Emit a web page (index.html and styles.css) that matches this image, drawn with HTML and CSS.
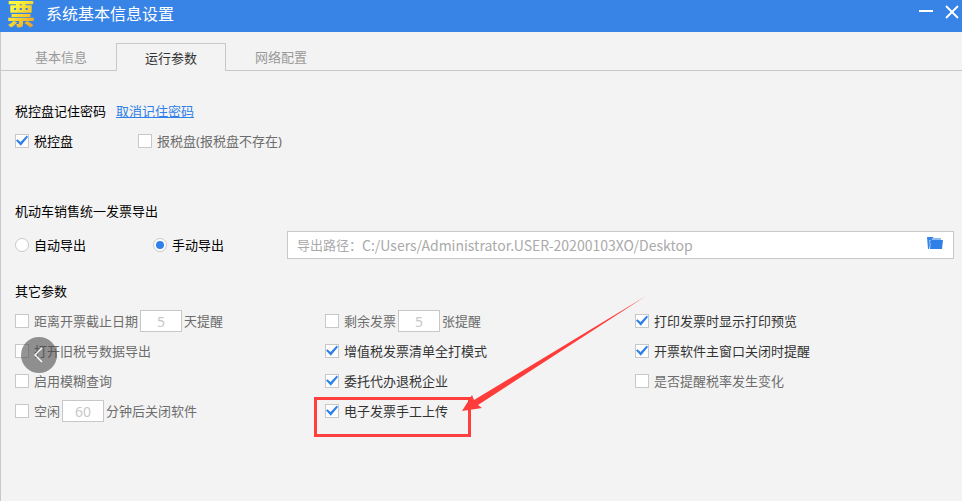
FILE: index.html
```html
<!DOCTYPE html>
<html lang="zh-CN">
<head>
    <meta charset="UTF-8">
    <meta name="viewport" content="width=device-width, initial-scale=1">
    <link rel="stylesheet" href="styles.css">
    <title>系统基本信息设置</title>
</head>
<body>

<header class="titlebar">
    <span class="logo">票</span>
    <h1 class="title">系统基本信息设置</h1>
    <button type="button" class="winbtn" aria-label="最小化">
        <svg width="16" height="16" viewBox="0 0 16 16"><path d="M1 7h14" stroke="#fff" stroke-width="2"/></svg>
    </button>
    <button type="button" class="winbtn" aria-label="关闭">
        <svg width="16" height="16" viewBox="0 0 16 16"><path d="M2 2l12 12M14 2L2 14" stroke="#fff" stroke-width="1.8"/></svg>
    </button>
</header>

<main class="window">
    <nav class="tabs">
        <button type="button" class="tab">基本信息</button>
        <button type="button" class="tab active">运行参数</button>
        <button type="button" class="tab">网络配置</button>
    </nav>

    <div class="content">
        <section class="section">
            <div class="row">
                <h2 class="heading">税控盘记住密码</h2>
                <a href="#" class="link">取消记住密码</a>
            </div>
            <div class="row disks">
                <label class="option strong"><input type="checkbox" class="check" checked>税控盘</label>
                <label class="option muted"><input type="checkbox" class="check">报税盘(报税盘不存在)</label>
            </div>
        </section>

        <section class="section">
            <h2 class="heading">机动车销售统一发票导出</h2>
            <div class="export">
                <label class="option strong"><input type="radio" name="export" class="radio">自动导出</label>
                <label class="option strong"><input type="radio" name="export" class="radio" checked>手动导出</label>
                <div class="path">
                    <label for="path">导出路径：</label>
                    <input type="text" id="path" class="pathinput" value="C:/Users/Administrator.USER-20200103XO/Desktop">
                    <button type="button" class="browse" aria-label="选择文件夹">
                        <svg width="16" height="13" viewBox="0 0 16 13">
                            <path d="M0 0h6l1 2h7v3H4L2 12H1z" fill="#3784e7"/>
                            <path d="M5 1h9v3H3L2 11V3h3z" fill="#8dbcf5"/>
                            <path d="M4 3h12l-1 9H3z" fill="#3080e8"/>
                        </svg>
                    </button>
                </div>
            </div>
        </section>

        <section class="section">
            <h2 class="heading">其它参数</h2>
            <div class="params">
                <div class="column">
                    <div class="option muted">
                        <input type="checkbox" class="check" id="deadline">
                        <label for="deadline">距离开票截止日期</label>
                        <input type="text" class="number" value="5" aria-label="天数">
                        <span>天提醒</span>
                    </div>
                    <label class="option muted"><input type="checkbox" class="check">打开旧税号数据导出</label>
                    <label class="option muted"><input type="checkbox" class="check">启用模糊查询</label>
                    <div class="option muted">
                        <input type="checkbox" class="check" id="idle">
                        <label for="idle">空闲</label>
                        <input type="text" class="number" value="60" aria-label="分钟">
                        <span>分钟后关闭软件</span>
                    </div>
                    <button type="button" class="prev" aria-label="上一张">
                        <svg width="36" height="36" viewBox="0 0 36 36"><path d="M21 11l-7 7 7 7" fill="none" stroke="#fff" stroke-width="1.4"/></svg>
                    </button>
                </div>
                <div class="column">
                    <div class="option muted">
                        <input type="checkbox" class="check" id="remain">
                        <label for="remain">剩余发票</label>
                        <input type="text" class="number" value="5" aria-label="张数">
                        <span>张提醒</span>
                    </div>
                    <label class="option"><input type="checkbox" class="check" checked>增值税发票清单全打模式</label>
                    <label class="option"><input type="checkbox" class="check" checked>委托代办退税企业</label>
                    <label class="option"><input type="checkbox" class="check" checked>电子发票手工上传</label>
                    <div class="highlight"></div>
                    <svg class="arrow" width="186" height="116" viewBox="0 0 186 116">
                        <path d="M0 115L10 99l2 5L184 0 16 109l4 3z" fill="#ff3c3a"/>
                    </svg>
                </div>
                <div class="column">
                    <label class="option"><input type="checkbox" class="check" checked>打印发票时显示打印预览</label>
                    <label class="option"><input type="checkbox" class="check" checked>开票软件主窗口关闭时提醒</label>
                    <label class="option muted"><input type="checkbox" class="check">是否提醒税率发生变化</label>
                </div>
            </div>
        </section>
    </div>
</main>

</body>
</html>
```

FILE: styles.css
```css
* {
    box-sizing: border-box;
}

body {
    margin: 0;
    min-height: 100vh;
    display: flex;
    flex-direction: column;
    background-color: #f3f3f3;
    color: #333;
    font-family: "Noto Sans", "Noto Sans CJK SC", sans-serif;
    font-size: 13px;
    line-height: 20px;
}

button,
input {
    margin: 0;
    padding: 0;
    border: none;
    background: none;
    color: inherit;
    font: inherit;
}

button {
    cursor: pointer;
}

svg {
    display: block;
}

/* title bar */

.titlebar {
    display: flex;
    gap: 10px;
    height: 32px;
    padding: 0 2px 0 7px;
    background-color: #3783e6;
    color: #fff;
}

.logo {
    width: 29px;
    font-size: 28px;
    font-weight: 900;
    line-height: 28px;
    color: transparent;
    background: linear-gradient(135deg, #fff83c 20%, #e9a126 85%);
    -webkit-background-clip: text;
    background-clip: text;
}

.title {
    flex: 1;
    margin: 0;
    font-size: 16px;
    font-weight: normal;
    line-height: 28px;
}

.winbtn {
    height: 24px;
}

/* tabs */

.window {
    flex: 1;
    border-left: 1px solid #c8c8c8;
}

.tabs {
    display: flex;
    padding: 11px 0 0 5px;
    box-shadow: inset 0 -1px #c8c8c8;
}

.tab {
    width: 110px;
    height: 28px;
    color: #999;
}

.tab.active {
    border: 1px solid #c8c8c8;
    border-bottom: none;
    background-color: #f3f3f3;
    color: #333;
}

/* settings */

.content {
    display: flex;
    flex-direction: column;
    gap: 40px;
    padding: 25px 8px 20px 14px;
}

.section + .section + .section {
    margin-top: -24px;
}

.row {
    display: flex;
    align-items: center;
    gap: 10px;
}

.heading {
    margin: 0;
    color: #000;
    font-size: 13px;
    font-weight: normal;
    line-height: 30px;
}

.link {
    color: #2f80e8;
}

.option {
    display: flex;
    align-items: center;
    height: 30px;
    white-space: nowrap;
}

.strong {
    color: #000;
}

.muted {
    color: #6d6d6d;
}

.disks {
    gap: 65px;
}

.export {
    display: grid;
    grid-template-columns: 138px 134px 1fr;
    align-items: center;
    padding-top: 4px;
}

.check,
.radio {
    appearance: none;
    flex: none;
    width: 14px;
    height: 14px;
    margin-right: 5px;
    border: 1px solid #c8c8c8;
    background-color: #fff;
}

.check:checked::before {
    content: "";
    display: block;
    width: 12px;
    height: 12px;
    background-color: #2f80e8;
    clip-path: polygon(0 45%, 12% 35%, 38% 58%, 90% 5%, 100% 16%, 40% 90%);
}

.radio {
    border-radius: 50%;
}

.radio:checked::before {
    content: "";
    display: block;
    width: 8px;
    height: 8px;
    margin: 2px;
    border-radius: 50%;
    background-color: #2f80e8;
}

.path {
    display: flex;
    align-items: center;
    height: 28px;
    padding: 0 10px 0 9px;
    border: 1px solid #c8c8c8;
    background-color: #fff;
    color: #aaa;
}

.pathinput {
    flex: 1;
    min-width: 0;
    font-family: "Noto Sans CJK SC", sans-serif;
    font-size: 14px;
}

.browse {
    padding-bottom: 4px;
}

.params {
    display: grid;
    grid-template-columns: repeat(3, 1fr);
    padding-right: 9px;
}

.column {
    position: relative;
}

.number {
    width: 42px;
    height: 22px;
    margin: 0 2px;
    border: 1px solid #c8c8c8;
    background-color: #fff;
    color: #c8c8c8;
    font-size: 14px;
    text-align: center;
}

/* things lying over the settings */

.prev {
    position: absolute;
    top: 31px;
    left: 6px;
    border-radius: 50%;
    background-color: rgba(70, 70, 70, 0.58);
}

.highlight {
    position: absolute;
    top: 91px;
    left: -11px;
    width: 157px;
    height: 40px;
    border: 3px solid #ff3f3d;
    pointer-events: none;
}

.arrow {
    position: absolute;
    top: -10px;
    left: 137px;
    z-index: 1;
    pointer-events: none;
}
```
